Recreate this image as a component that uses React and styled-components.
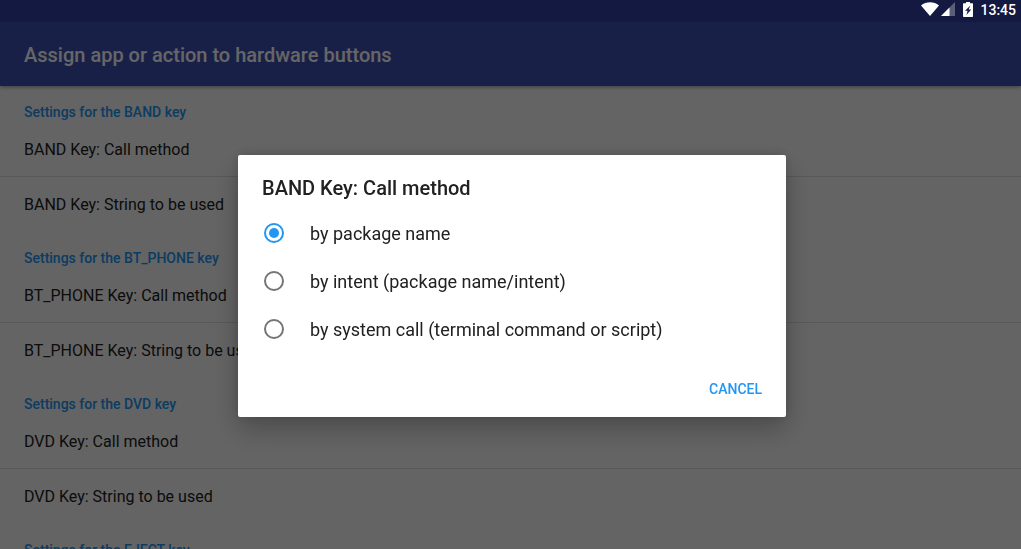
import React, { useState } from "react";
import styled, { createGlobalStyle } from "styled-components";

const GlobalStyle = createGlobalStyle`
  *, *::before, *::after { box-sizing: border-box; }
  html, body { margin: 0; height: 100%; }
  body {
    overflow: hidden;
    background: #fafafa;
    color: #212121;
    font-family: Roboto, "Liberation Sans", sans-serif;
  }
  #root { height: 100%; }
`;

const Screen = styled.div`
  display: flex;
  flex-direction: column;
  height: 100%;
  overflow: hidden;
`;

const StatusBar = styled.header`
  position: relative;
  z-index: 3;
  flex: none;
  display: flex;
  align-items: center;
  justify-content: flex-end;
  height: 22px;
  padding: 0 5px 2px;
  background: #131940;
  color: #fff;
`;

const StatusIcon = styled.svg`
  display: block;
  flex: none;
  margin-right: ${(p) => p.$gap}px;
  margin-bottom: 2px;
`;

const Clock = styled.time`
  font-size: 14px;
  font-weight: 500;
  line-height: 20px;
`;

const AppBar = styled.div`
  position: relative;
  z-index: 1;
  flex: none;
  display: flex;
  align-items: center;
  height: 64px;
  padding: 2px 24px 0;
  background: #3f51b5;
  box-shadow: 0 1px 4px rgba(0, 0, 0, 0.4);
`;

const AppTitle = styled.h1`
  margin: 0;
  color: #fff;
  font-size: 20px;
  font-weight: 500;
  line-height: 28px;
`;

const Preferences = styled.main`
  flex: 1;
  min-height: 0;
  overflow-y: auto;
  scrollbar-width: none;
`;

const Category = styled.h2`
  margin: 0;
  padding: 16px 24px 0;
  color: #2196f3;
  font-size: 14px;
  font-weight: 500;
  line-height: 20px;
`;

const Preference = styled.button`
  display: block;
  width: 100%;
  height: 55px;
  padding: 2px 24px 0;
  border: 0;
  border-bottom: 1px solid ${(p) => (p.$divided ? "#dcdcdc" : "transparent")};
  background: none;
  color: #212121;
  font: inherit;
  font-size: 16px;
  line-height: 24px;
  text-align: left;
`;

const Scrim = styled.div`
  position: fixed;
  inset: 0;
  z-index: 2;
  display: flex;
  align-items: center;
  justify-content: center;
  padding: 23px 0 0 3px;
  background: rgba(0, 0, 0, 0.6);
`;

const Dialog = styled.form`
  width: 548px;
  max-width: 90%;
  padding: 19px 0 10px;
  border-radius: 2px;
  background: #fff;
  box-shadow: 0 12px 28px rgba(0, 0, 0, 0.25), 0 0 12px rgba(0, 0, 0, 0.14);
`;

const DialogTitle = styled.h2`
  margin: 0 0 7px;
  padding: 0 24px;
  font-size: 20px;
  font-weight: 500;
  line-height: 28px;
`;

const Option = styled.label`
  display: flex;
  align-items: center;
  gap: 26px;
  height: 48px;
  padding: 0 26px;
  font-size: 18px;
  line-height: 24px;
`;

const OptionText = styled.span`
  padding-top: 2px;
`;

const Radio = styled.input`
  appearance: none;
  flex: none;
  display: grid;
  place-content: center;
  width: 20px;
  height: 20px;
  margin: 0;
  border: 2px solid #757575;
  border-radius: 50%;

  &:checked { border-color: #2196f3; }

  &:checked::before {
    content: "";
    width: 10px;
    height: 10px;
    border-radius: 50%;
    background: #2196f3;
  }
`;

const Actions = styled.div`
  display: flex;
  justify-content: flex-end;
  padding: 18px 16px 0;
`;

const TextButton = styled.button`
  height: 36px;
  padding: 0 8px;
  border: 0;
  background: none;
  color: #2196f3;
  font: inherit;
  font-size: 14px;
  font-weight: 500;
`;

const keys = ["BAND", "BT_PHONE", "DVD", "EJECT"];

const methods = [
  ["package", "by package name"],
  ["intent", "by intent (package name/intent)"],
  ["system", "by system call (terminal command or script)"],
];

export default function App() {
  const [method, setMethod] = useState("package");
  const [open, setOpen] = useState(true);

  return (
    <>
      <GlobalStyle />
      <Screen>
        <StatusBar>
          <StatusIcon $gap={2} width="18" height="14" viewBox="0 0 18 14" aria-hidden="true">
            <path d="M0 3.4C5-.8 13-.8 18 3.4L9 14Z" fill="#fff" />
          </StatusIcon>
          <StatusIcon $gap={8} width="14" height="14" viewBox="0 0 14 14" aria-hidden="true">
            <path d="M0 14 14 0V14Z" fill="#fff" fillOpacity="0.3" />
            <path d="M0 14 8.5 5.5V14Z" fill="#fff" />
          </StatusIcon>
          <StatusIcon $gap={7} width="10" height="15" viewBox="0 0 10 15" aria-hidden="true">
            <path d="M3 0H7V1.2H9.4Q10 1.2 10 2V14.2Q10 15 9.2 15H.8Q0 15 0 14.2V2Q0 1.2.6 1.2H3Z" fill="#fff" />
            <path d="M7.4 3.4 2 8.8H4.6L3.4 13 8.2 7.4H5.6Z" fill="#131940" />
          </StatusIcon>
          <Clock>13:45</Clock>
        </StatusBar>
        <AppBar>
          <AppTitle>Assign app or action to hardware buttons</AppTitle>
        </AppBar>
        <Preferences>
          {keys.map((key) => (
            <section key={key}>
              <Category>Settings for the {key} key</Category>
              <Preference type="button" $divided onClick={() => setOpen(true)}>
                {key} Key: Call method
              </Preference>
              <Preference type="button">{key} Key: String to be used</Preference>
            </section>
          ))}
        </Preferences>
      </Screen>
      {open && (
        <Scrim>
          <Dialog role="dialog" aria-modal="true" aria-labelledby="dialog-title">
            <DialogTitle id="dialog-title">BAND Key: Call method</DialogTitle>
            {methods.map(([value, label]) => (
              <Option key={value}>
                <Radio
                  type="radio"
                  name="method"
                  value={value}
                  checked={method === value}
                  onChange={() => setMethod(value)}
                />
                <OptionText>{label}</OptionText>
              </Option>
            ))}
            <Actions>
              <TextButton type="button" onClick={() => setOpen(false)}>CANCEL</TextButton>
            </Actions>
          </Dialog>
        </Scrim>
      )}
    </>
  );
}
